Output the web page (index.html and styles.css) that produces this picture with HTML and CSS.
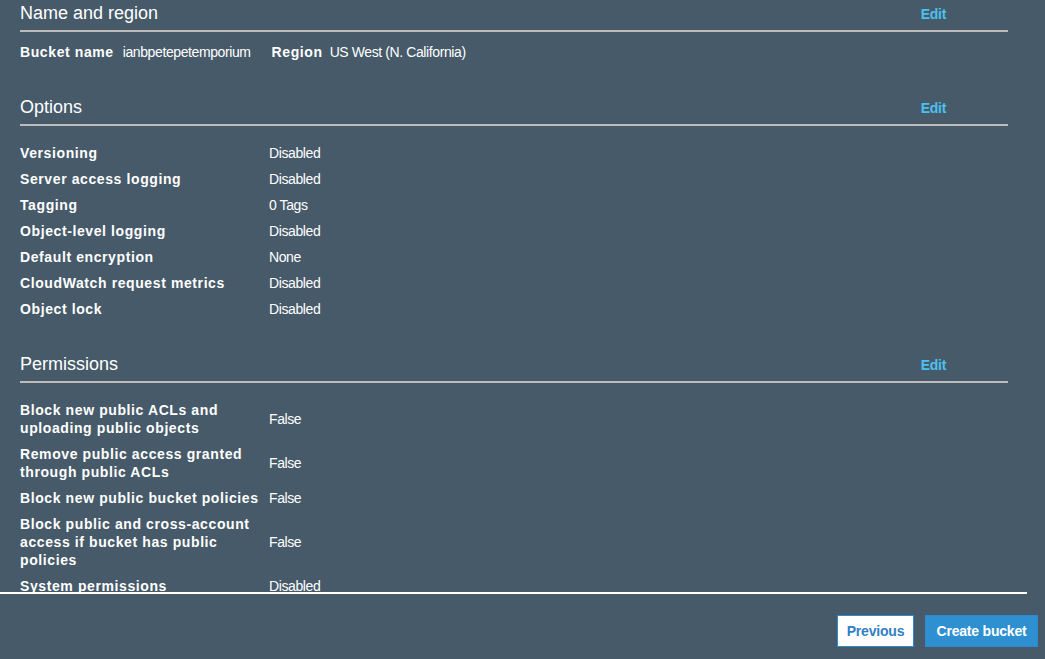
FILE: index.html
```html
<!DOCTYPE html>
<html>
<head>
<meta charset="utf-8">
<link rel="stylesheet" href="styles.css">
</head>
<body>
<div class="scroll">
  <section class="section first">
    <div class="section-head">
      <h2>Name and region</h2>
      <a class="edit">Edit</a>
    </div>
    <div class="inline-row">
      <span class="label">Bucket name</span><span class="value">ianbpetepetemporium</span>
      <span class="label region">Region</span><span class="value region-value">US West (N. California)</span>
    </div>
  </section>

  <section class="section">
    <div class="section-head">
      <h2>Options</h2>
      <a class="edit">Edit</a>
    </div>
    <div class="grid">
      <div class="label">Versioning</div><div class="value">Disabled</div>
      <div class="label">Server access logging</div><div class="value">Disabled</div>
      <div class="label">Tagging</div><div class="value">0 Tags</div>
      <div class="label">Object-level logging</div><div class="value">Disabled</div>
      <div class="label">Default encryption</div><div class="value">None</div>
      <div class="label">CloudWatch request metrics</div><div class="value">Disabled</div>
      <div class="label">Object lock</div><div class="value">Disabled</div>
    </div>
  </section>

  <section class="section">
    <div class="section-head">
      <h2>Permissions</h2>
      <a class="edit">Edit</a>
    </div>
    <div class="grid">
      <div class="label">Block new public ACLs and uploading public objects</div><div class="value">False</div>
      <div class="label">Remove public access granted through public ACLs</div><div class="value">False</div>
      <div class="label">Block new public bucket policies</div><div class="value">False</div>
      <div class="label">Block public and cross-account access if bucket has public policies</div><div class="value">False</div>
      <div class="label">System permissions</div><div class="value">Disabled</div>
    </div>
  </section>
</div>
<div class="footer">
  <button class="btn btn-secondary">Previous</button>
  <button class="btn btn-primary">Create bucket</button>
</div>
</body>
</html>
```

FILE: styles.css
```css
html, body {
  margin: 0;
  padding: 0;
  background: #465a69;
  height: 100%;
}
body {
  font-family: "Liberation Sans", Arial, sans-serif;
  color: #ffffff;
  font-size: 14px;
}
.scroll {
  width: 1027px;
  height: 592px;
  overflow: hidden;
  border-bottom: 2px solid #ffffff;
}
.section {
  padding: 0 19px 0 20px;
  margin-top: 35px;
}
.section.first {
  margin-top: 2px;
}
.section-head {
  display: flex;
  justify-content: space-between;
  align-items: baseline;
  border-bottom: 2px solid #bcbcbc;
  padding-bottom: 6px;
}
h2 {
  margin: 0;
  font-size: 18px;
  line-height: 22px;
  font-weight: normal;
}
.edit {
  color: #4cc0ee;
  font-weight: bold;
  font-size: 14px;
  margin-right: 62px;
  letter-spacing: -0.3px;
}
.inline-row {
  margin-top: 11px;
  line-height: 18px;
  display: flex;
  align-items: center;
}
.inline-row .value {
  margin-left: 9px;
}
.inline-row .region-value {
  margin-left: 7px;
}
.inline-row .region {
  margin-left: 21px;
}
.label {
  font-weight: bold;
  letter-spacing: 0.6px;
}
.value {
  letter-spacing: -0.4px;
}
.grid {
  margin-top: 18px;
  display: grid;
  grid-template-columns: 249px 1fr;
  row-gap: 8px;
  line-height: 18px;
  align-items: center;
}
.grid .label {
  padding-right: 4px;
}
.footer {
  display: flex;
  justify-content: flex-end;
  gap: 11px;
  padding: 21px 7px 0 0;
}
.btn {
  font-family: "Liberation Sans", Arial, sans-serif;
  font-size: 14px;
  font-weight: bold;
  height: 32px;
  padding: 0;
  white-space: nowrap;
  border: 1px solid #2e8ad0;
  letter-spacing: -0.2px;
  cursor: pointer;
}
.btn-secondary {
  background: #ffffff;
  color: #2f7fc6;
  width: 77px;
}
.btn-primary {
  background: #2e8fd1;
  color: #ffffff;
  width: 113px;
}
```
